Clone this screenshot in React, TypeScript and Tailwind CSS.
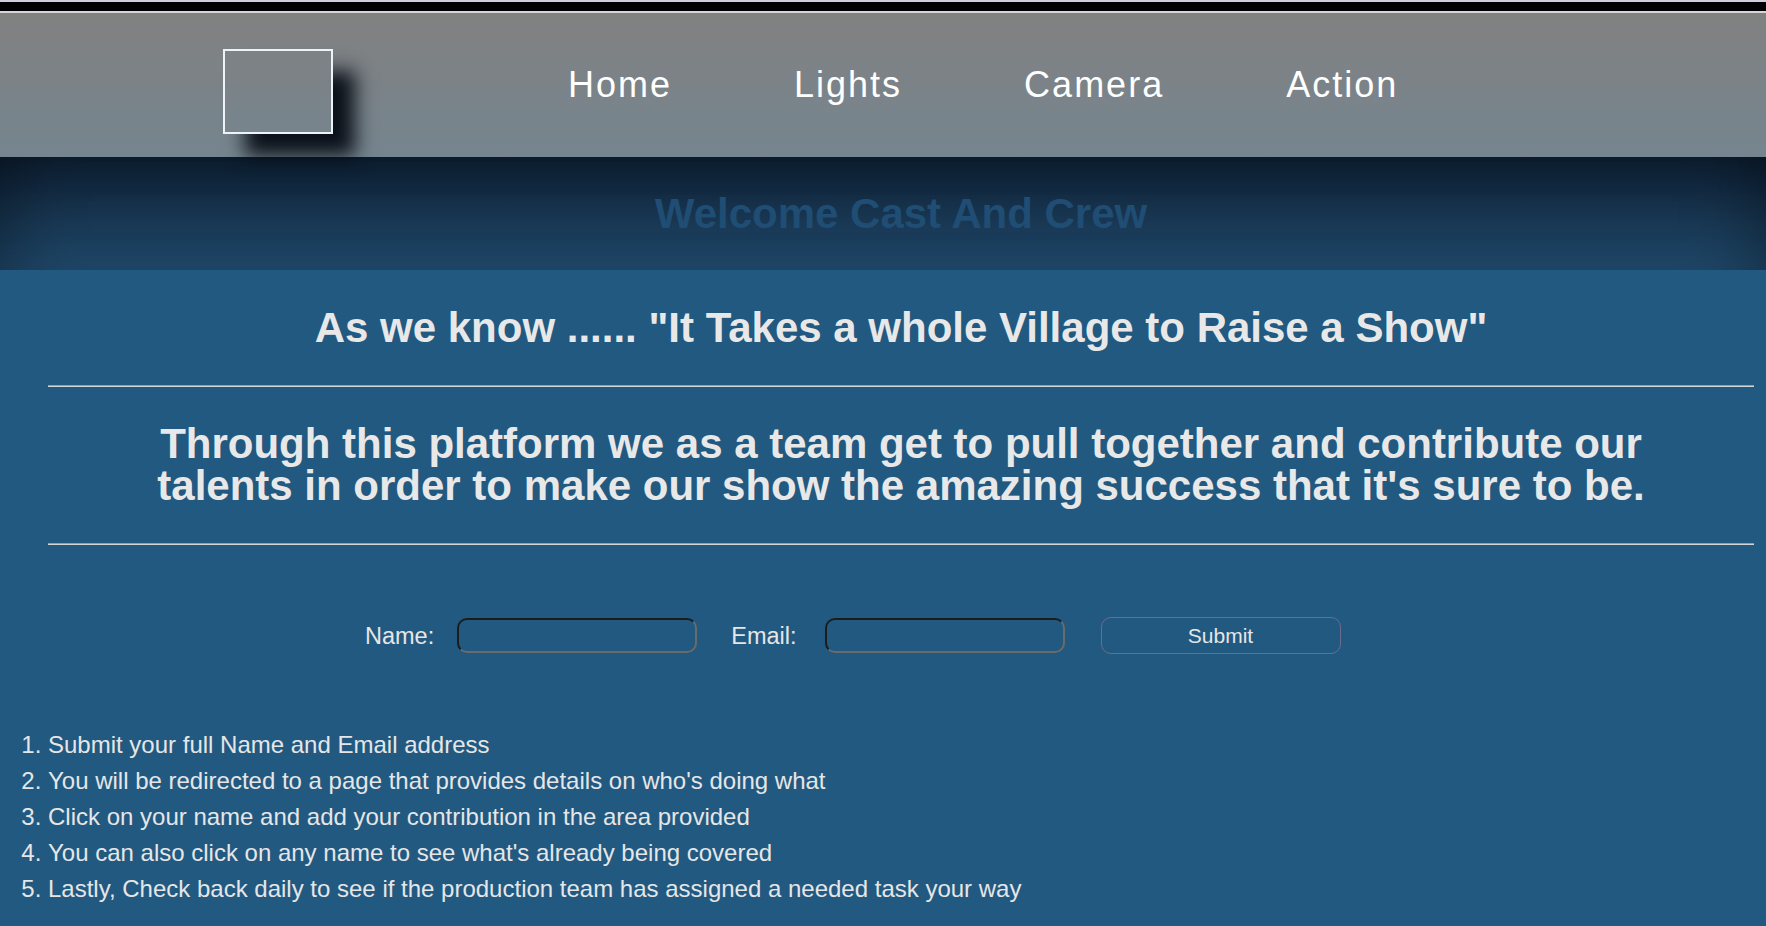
import React from "react";

const items = [
  "Submit your full Name and Email address",
  "You will be redirected to a page that provides details on who's doing what",
  "Click on your name and add your contribution in the area provided",
  "You can also click on any name to see what's already being covered",
  "Lastly, Check back daily to see if the production team has assigned a needed task your way",
];

export default function App() {
  return (
    <div
      className="min-h-[926px] w-full bg-[#215981] text-[#e6e6e6]"
      style={{ fontFamily: '"Liberation Sans", Arial, sans-serif' }}
    >
      {/* top strips */}
      <div className="h-[2px] bg-[#cfcfdf]" />
      <div className="h-[9px] bg-[#010104]" />
      <div className="h-[2px] bg-[#d6d6d6]" />

      {/* header */}
      <header className="flex h-[144px] items-start bg-gradient-to-b from-[#818181] to-[#75858f]">
        <div className="ml-[223px] mt-[36px] h-[85px] w-[110px] border-2 border-[#eef3f8] shadow-[22px_22px_18px_rgba(6,12,20,0.95)]" />
        <nav className="ml-[235px] mt-[54px] flex gap-[122px] text-[36px] leading-[36px] tracking-[2px] text-white">
          <a>Home</a>
          <a>Lights</a>
          <a>Camera</a>
          <a>Action</a>
        </nav>
      </header>

      {/* banner */}
      <div className="h-[113px] bg-gradient-to-b from-[#0d1e31] to-[#214b6e] pl-[48px] pr-[12px] pt-[36px] shadow-[inset_50px_0_70px_-40px_rgba(0,0,0,0.35),inset_-50px_0_70px_-40px_rgba(0,0,0,0.35)]">
        <h1 className="text-center text-[42px] font-bold leading-[42px] text-[#1f4d74]">
          Welcome Cast And Crew
        </h1>
      </div>

      {/* main */}
      <main className="ml-[48px] mr-[12px] pt-[37px]">
        <h2 className="text-center text-[42px] font-bold leading-[42px] text-[#e8e8e8]">
          As we know ...... "It Takes a whole Village to Raise a Show"
        </h2>
        <div className="mt-[36px] border-b border-t border-b-[#d4d4d4] border-t-[#9c9c9c]" />
        <h2 className="mt-[36px] text-center text-[42px] font-bold leading-[42px] text-[#e8e8e8]">
          Through this platform we as a team get to pull together and contribute our
          <br />
          talents in order to make our show the amazing success that it's sure to be.
        </h2>
        <div className="mt-[36px] border-b border-t border-b-[#d4d4d4] border-t-[#9c9c9c]" />
      </main>

      {/* form */}
      <form className="mt-[72px] flex h-[37px] items-center pl-[365px]" onSubmit={(e) => e.preventDefault()}>
        <label className="text-[23.5px] leading-[28px] text-[#e6e6e6]">Name:</label>
        <input
          type="text"
          className="ml-[23px] h-[35px] w-[240px] rounded-[10px] border-2 border-b-[#6a6a6a] border-l-[#1c1c1c] border-r-[#6a6a6a] border-t-[#1c1c1c] bg-transparent outline-none"
        />
        <label className="ml-[34px] text-[23.5px] leading-[28px] text-[#e6e6e6]">Email:</label>
        <input
          type="text"
          className="ml-[28px] h-[35px] w-[240px] rounded-[10px] border-2 border-b-[#6a6a6a] border-l-[#1c1c1c] border-r-[#6a6a6a] border-t-[#1c1c1c] bg-transparent outline-none"
        />
        <button
          type="submit"
          className="ml-[36px] h-[37px] w-[240px] rounded-[10px] border border-[#6e6b8c] bg-transparent text-[21px] leading-[24px] text-[#e6e6e6]"
        >
          Submit
        </button>
      </form>

      {/* list */}
      <ol className="mt-[73px] list-outside list-decimal pl-[48px] text-[24px] leading-[36px] text-[#e6e6e6]">
        {items.map((t) => (
          <li key={t}>{t}</li>
        ))}
      </ol>
    </div>
  );
}
